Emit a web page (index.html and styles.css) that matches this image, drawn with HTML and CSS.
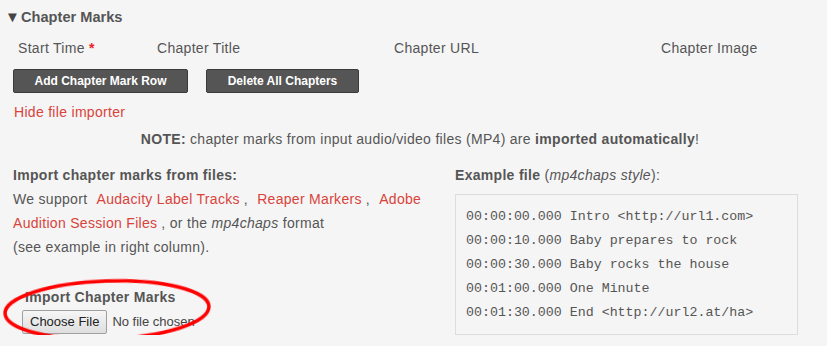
FILE: index.html
```html
<!DOCTYPE html>
<html lang="en">
<head>
  <meta charset="UTF-8" />
  <title>Chapter Marks</title>
  <link rel="stylesheet" href="styles.css">
</head>
<body>
  <div class="panel">
    <h3 class="panel-title"><span class="arrow">▼</span> Chapter Marks</h3>

    <div class="chapter-head">
      <span>Start Time <b class="req">*</b></span>
      <span>Chapter Title</span>
      <span>Chapter URL</span>
      <span>Chapter Image</span>
    </div>

    <div class="actions">
      <button class="btn btn-add">Add Chapter Mark Row</button>
      <button class="btn btn-del">Delete All Chapters</button>
    </div>

    <a class="link hide-link" href="#">Hide file importer</a>

    <p class="note"><strong>NOTE:</strong> chapter marks from input audio/video files (MP4) are <strong>imported automatically</strong>!</p>

    <div class="importer">
      <div class="import-left">
        <strong>Import chapter marks from files:</strong><br>
        We support <a class="link" href="#">Audacity Label Tracks</a>, <a class="link" href="#">Reaper Markers</a>, <a class="link" href="#">Adobe Audition Session Files</a>, or the <em>mp4chaps</em> format<br>
        (see example in right column).

        <div class="upload">
          <label class="upload-label">Import Chapter Marks</label>
          <div class="file-row">
            <span class="file-btn">Choose File</span>
            <span class="file-name">No file chosen</span>
          </div>
          <svg class="circle" width="220" height="70" viewBox="0 0 220 70">
            <defs>
              <filter id="soft"><feGaussianBlur stdDeviation="0.6"/></filter>
            </defs>
            <ellipse cx="106" cy="35" rx="102" ry="29" fill="none" stroke="#f00" stroke-width="3.5" filter="url(#soft)" transform="rotate(-2 106 35)"/>
          </svg>
        </div>
      </div>

      <div class="import-right">
        <div class="example-title"><strong>Example file</strong> (<em>mp4chaps style</em>):</div>
<pre class="example">00:00:00.000 Intro &lt;http://url1.com&gt;
00:00:10.000 Baby prepares to rock
00:00:30.000 Baby rocks the house
00:01:00.000 One Minute
00:01:30.000 End &lt;http://url2.at/ha&gt;</pre>
      </div>
    </div>
  </div>
</body>
</html>
```

FILE: styles.css
```css
body {
  margin: 0;
  background: #f5f5f5;
  font-family: 'Liberation Sans', Arial, sans-serif;
  font-size: 14px;
  letter-spacing: 0.3px;
  color: #555;
}
.panel {
  padding: 8px 0 0 13px;
}
.panel-title {
  margin: 0;
  font-size: 14.6px;
  font-weight: bold;
  letter-spacing: 0;
  color: #555;
  line-height: 18px;
}
.arrow {
  display: inline-block;
  width: 12px;
  margin-left: -8px;
  font-size: 15px;
  color: #444;
}
.chapter-head {
  display: grid;
  grid-template-columns: 139px 237px 267px auto;
  padding-left: 5px;
  margin-top: 13px;
  line-height: 18px;
}
.req {
  color: #e22;
  font-weight: bold;
}
.actions {
  display: flex;
  gap: 18px;
  margin-top: 12px;
}
.btn {
  height: 24px;
  padding: 0 14px;
  background: #555;
  border: 1px solid #3a3a3a;
  border-radius: 2px;
  color: #fff;
  font-family: 'Liberation Sans', Arial, sans-serif;
  font-size: 12px;
  font-weight: bold;
  letter-spacing: 0;
}
.btn-add {
  width: 175px;
}
.btn-del {
  width: 153px;
}
.link {
  color: #d9433b;
  text-decoration: none;
  margin: 0 4px 0 5px;
}
.hide-link {
  display: block;
  margin: 10px 0 0 1px;
  line-height: 18px;
}
.note {
  margin: 9px 0 0;
  text-align: center;
  line-height: 18px;
}
.importer {
  display: flex;
  margin-top: 15px;
}
.import-left {
  width: 442px;
  line-height: 24px;
}
.import-left .link:nth-of-type(3) {
  margin-left: 5px;
}
.upload {
  position: relative;
  margin-top: 29px;
  padding-left: 12px;
}
.upload-label {
  display: block;
  font-weight: bold;
  line-height: 18px;
}
.file-row {
  display: flex;
  align-items: center;
  gap: 5px;
  margin-top: 4px;
  margin-left: -3px;
  letter-spacing: 0;
}
.file-btn {
  display: inline-block;
  height: 22px;
  padding: 0 7px;
  line-height: 22px;
  border: 1px solid #a0a0a0;
  border-radius: 2px;
  background: linear-gradient(#f6f6f6, #dedede);
  color: #222;
  font-size: 13px;
}
.file-name {
  font-size: 13px;
  color: #444;
}
.circle {
  position: absolute;
  left: -12px;
  top: -13px;
  pointer-events: none;
}
.import-right {
  width: 343px;
}
.example-title {
  line-height: 24px;
}
.example-title em, .import-left em {
  font-style: italic;
}
.example {
  margin: 7px 0 0;
  padding: 10px 10px 9px;
  border: 1px solid #ddd;
  font-family: 'Liberation Mono', 'Courier New', monospace;
  font-size: 13.3px;
  letter-spacing: 0;
  line-height: 24px;
  color: #555;
}
```
